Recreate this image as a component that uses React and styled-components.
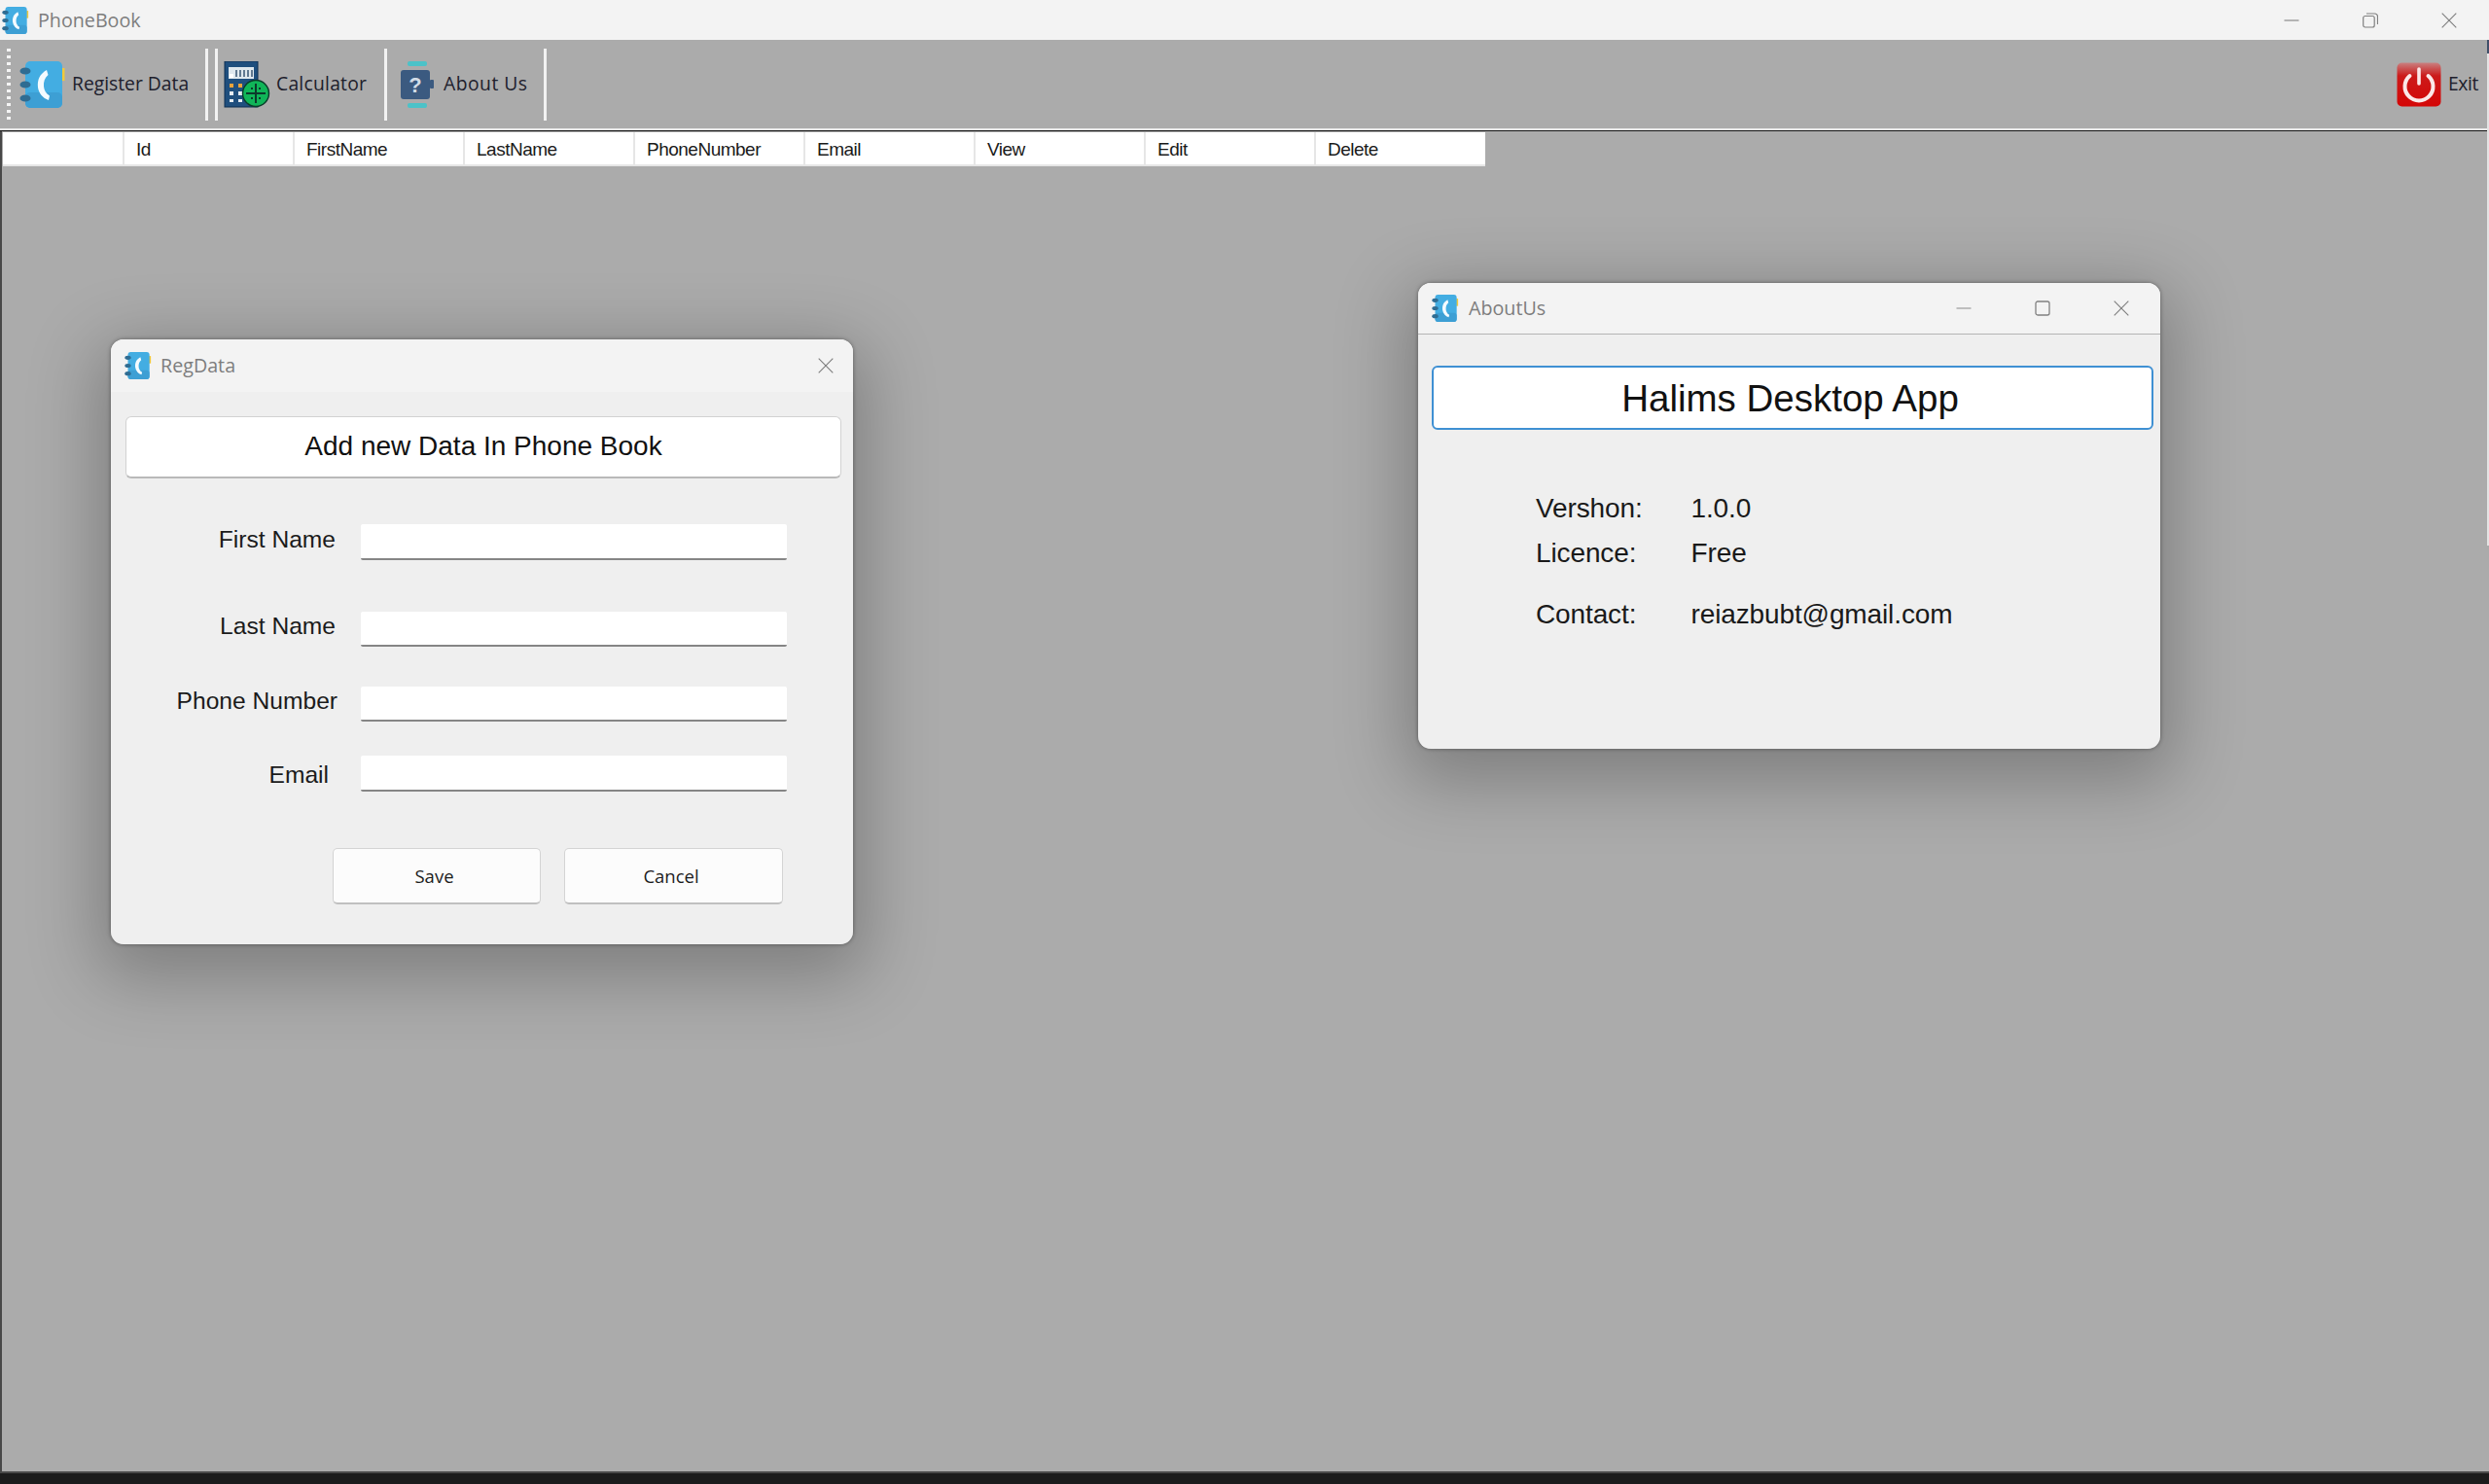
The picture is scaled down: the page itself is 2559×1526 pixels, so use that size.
import React from "react";
import styled, { createGlobalStyle } from "styled-components";

const Global = createGlobalStyle`
  html, body { margin: 0; padding: 0; width: 2559px; height: 1526px; overflow: hidden; background: #1c1c1c; }
  * { box-sizing: border-box; }
`;

const Screen = styled.div`
  width: 2559px; height: 1526px; display: flex; flex-direction: column;
  background: #ababab; font-family: "Liberation Sans", Arial, sans-serif; position: relative;
`;
const TitleBar = styled.div`
  height: 41px; flex: none; background: #f3f3f3; display: flex; align-items: center;
  padding-left: 2px;
`;
const TitleText = styled.span`
  margin-left: ${p => p.$gap || 9}px; color: #7d7d7d; font: 19.7px "Open Sans", sans-serif; line-height: 1;
`;
const Controls = styled.div`
  margin-left: auto; display: flex; align-items: center; gap: ${p => p.$gap}px; padding-right: ${p => p.$right}px;
`;
const Toolbar = styled.div`
  height: 91px; flex: none; background: #ababab; display: flex; align-items: center; position: relative;
  padding-left: 7px; border-top-left-radius: 6px;
`;
const Grip = styled.div`
  width: 5px; height: 74px; margin-right: 8px; flex: none;
  background-image: linear-gradient(#f4f4f4 50%, transparent 50%);
  background-size: 4px 7px;
  background-repeat: repeat-y;
`;
const ToolItem = styled.div`
  display: flex; align-items: center; flex: none; gap: ${p => p.$gap}px; width: ${p => p.$width}px;
  font: 19.3px "Open Sans", sans-serif; color: #20202c; white-space: nowrap; padding-left: ${p => p.$pad || 0}px;
`;
const ToolLabel = styled.span`
  margin-top: -3px; letter-spacing: ${p => p.$track || 0}px;
`;
const Sep = styled.div`
  width: 3px; height: 74px; background: #f2f2f2; flex: none; margin-right: ${p => p.$after || 0}px;
`;
const Spacer = styled.div` flex: 1; `;
const Rule = styled.div`
  height: 3px; flex: none; border-top: 2px solid #e8e8e8; border-bottom: 1px solid #151515;
`;
const Desktop = styled.div`
  flex: 1; position: relative; background: #ababab;
  border-left: 2px solid #484848;
  border-bottom: 2px solid #4a4a4a;
`;
const HeaderRow = styled.div`
  display: grid; grid-template-columns: 123px repeat(7, 175px) 176px; width: 1524px; height: 35px;
  margin: 1px 0 0 1px; background: #fff;
`;
const HeaderCell = styled.div`
  border-left: ${p => p.$first ? 0 : "2px solid #e6e6e6"}; border-bottom: 2px solid #e6e6e6;
  padding: 3px 0 0 12px; display: flex; align-items: center;
  font: 19px "Liberation Sans", Arial, sans-serif; color: #1a1a1a; letter-spacing: -0.5px;
`;
const Footer = styled.div` height: 11px; flex: none; background: #1c1c1c; `;
const EdgeMark = styled.div`
  position: absolute; right: 0; top: 41px; width: 2px; height: 520px; background: #e4e4e4;
`;
const EdgeTip = styled.div`
  position: absolute; right: 0; top: 41px; width: 2px; height: 14px; background: #40506a;
`;
const Window = styled.div`
  position: absolute; left: ${p => p.$x}px; top: ${p => p.$y}px; width: ${p => p.$w}px; height: ${p => p.$h}px;
  background: #efefef; border-radius: 13px; display: flex; flex-direction: column; overflow: hidden;
`;
const Shadow = styled.div`
  position: absolute; left: ${p => p.$x}px; top: ${p => p.$y}px; width: ${p => p.$w}px; height: ${p => p.$h}px;
  border-radius: 13px; box-shadow: 0 0 4px rgba(0,0,0,.4), 0 20px 70px 14px rgba(0,0,0,.26);
`;
const WinTitle = styled.div`
  height: ${p => p.$h}px; flex: none; background: #f3f3f3; display: flex; align-items: center; padding-left: 14px;
  border-bottom: ${p => p.$line ? "1px solid #b4b4b4" : "0"};
`;
const HeadingBox = styled.div`
  margin: ${p => p.$top}px ${p => p.$side}px 0 ${p => p.$left}px; height: ${p => p.$h}px; flex: none;
  display: flex; align-items: center; justify-content: center; background: #fff; border-radius: 6px;
  border: ${p => p.$focus ? "2px solid #3f90d3" : "1px solid #d2d2d2"};
  ${p => p.$focus ? "" : "border-bottom: 2px solid #b9b9b9;"}
  font-size: ${p => p.$size}px; color: #111; padding-right: ${p => p.$shift || 0}px;
  padding-top: ${p => p.$focus ? 1 : 0}px;
  padding-bottom: ${p => p.$focus ? 0 : 2}px;
`;
const FormRow = styled.div`
  display: flex; align-items: center; flex: none; justify-content: flex-end; height: ${p => p.$h}px; margin-top: ${p => p.$top}px;
  padding-right: 68px;
`;
const Label = styled.label`
  font-size: 24.6px; color: #1b1b1b; margin-right: ${p => p.$gap}px; margin-top: ${p => p.$dy || 0}px; white-space: nowrap;
`;
const Field = styled.div`
  width: 438px; height: 100%; background: #fff; border-bottom: 2px solid #858585; border-radius: 2px;
`;
const Buttons = styled.div`
  display: flex; gap: 24px; margin: 58px 0 0 228px;
`;
const Btn = styled.button`
  width: ${p => p.$w}px; height: 58px; background: #fcfcfc; border: 1.5px solid #d4d4d4; border-bottom: 2px solid #c0c0c0;
  border-radius: 5px; font: 18.5px "Open Sans", sans-serif; color: #1c1c1c; padding: 0 5px 0 0;
`;
const Info = styled.div`
  display: flex; flex-direction: column; padding: 0 0 0 121px;
`;
const InfoRow = styled.div`
  display: flex; align-items: center; height: 34px; margin-top: ${p => p.$top}px;
  font-size: 28px; color: #1a1a1a; white-space: nowrap; letter-spacing: -0.12px;
`;
const InfoKey = styled.span` width: 159.5px; flex: none; `;

const BookIcon = ({ size }) => (
  <svg width={size} height={size} viewBox="0 0 48 48">
    <rect x="43" y="7" width="3.5" height="13" fill="#f0c93c" />
    <rect x="6" y="0" width="38" height="48" rx="5" fill="#43ade2" />
    <rect x="6" y="32" width="38" height="16" rx="5" fill="#3d9fd4" />
    <ellipse cx="6" cy="10" rx="5.5" ry="3.6" fill="#2f6c92" />
    <ellipse cx="6" cy="24" rx="5.5" ry="3.6" fill="#2f6c92" />
    <ellipse cx="6" cy="38" rx="5.5" ry="3.6" fill="#2f6c92" />
    <path d="M28 9 C21 13 18 19 19 27 C20 33 24 38 30 40 L31 35.5 C27 33 25.5 30 25 26 C24.6 21 26 17 29.5 14 Z" fill="#f4fbff" />
  </svg>
);

const CalcIcon = () => (
  <svg width="48" height="48" viewBox="0 0 48 48">
    <rect x="1" y="0" width="34" height="47" fill="#1f4f7e" stroke="#0f2f50" strokeWidth="1" />
    <rect x="5" y="6" width="26" height="12" fill="#dfe8ee" />
    <rect x="6" y="13" width="4" height="4" fill="#fff" />
    <path d="M13 9v7M17 9v7M21 9v7M25 9v7M29 9v7" stroke="#1f3f60" strokeWidth="1.3" />
    <g fill="#e9a33c">
      <rect x="6" y="23" width="4" height="4" /><rect x="15" y="23" width="4" height="4" /><rect x="24" y="23" width="4" height="4" />
    </g>
    <g fill="#e6edf2">
      <rect x="6" y="31" width="4" height="4" /><rect x="15" y="31" width="4" height="4" />
      <rect x="6" y="39" width="4" height="3" /><rect x="15" y="39" width="4" height="3" />
    </g>
    <circle cx="33" cy="33" r="13.5" fill="#10b558" stroke="#0a3b2a" strokeWidth="1.4" />
    <path d="M33 23v20M23 33h20" stroke="#0c3a2b" strokeWidth="2" />
    <path d="M28 28h2M36 28h2M28 38h2M36 38h2" stroke="#0c3a2b" strokeWidth="2" />
  </svg>
);

const AboutIcon = () => (
  <svg width="35" height="48" viewBox="0 0 35 48">
    <rect x="7" y="0" width="20" height="5" rx="2" fill="#4cc2c8" />
    <rect x="7" y="43" width="20" height="5" rx="2" fill="#4cc2c8" />
    <rect x="0" y="9" width="30" height="30" rx="3" fill="#3b5a80" />
    <rect x="30" y="19" width="4" height="9" rx="1" fill="#3b5a80" />
    <text x="15" y="32" textAnchor="middle" fontFamily="Liberation Sans, sans-serif" fontWeight="700" fontSize="22" fill="#d3dce6">?</text>
  </svg>
);

const ExitIcon = () => (
  <svg width="46" height="46" viewBox="0 0 46 46">
    <defs>
      <linearGradient id="exitRed" x1="0" y1="0" x2="0" y2="1">
        <stop offset="0" stopColor="#c98080" />
        <stop offset="0.3" stopColor="#cc1a1a" />
        <stop offset="1" stopColor="#d40606" />
      </linearGradient>
    </defs>
    <rect x="0.5" y="0.5" width="45" height="45" rx="5" fill="url(#exitRed)" />
    <path d="M13.5 14 A14.5 14.5 0 1 0 32.5 14" fill="none" stroke="#fbe9e9" strokeWidth="4" strokeLinecap="round" />
    <path d="M23 7v15" stroke="#fbe9e9" strokeWidth="3.6" strokeLinecap="round" />
  </svg>
);

const Minimize = () => (
  <svg width="16" height="16" viewBox="0 0 16 16"><path d="M0.5 8h15" stroke="#8a8a8a" strokeWidth="1.2" fill="none" /></svg>
);
const Maximize = () => (
  <svg width="16" height="16" viewBox="0 0 16 16"><rect x="1" y="1" width="14" height="14" rx="2" stroke="#808080" strokeWidth="1.3" fill="none" /></svg>
);
const Restore = () => (
  <svg width="16" height="16" viewBox="0 0 16 16"><rect x="0.7" y="3.5" width="11.5" height="11.5" rx="2" stroke="#808080" strokeWidth="1.2" fill="none" /><path d="M4 1h8.5a3 3 0 0 1 3 3v8" stroke="#808080" strokeWidth="1.2" fill="none" /></svg>
);
const Close = () => (
  <svg width="16" height="16" viewBox="0 0 16 16"><path d="M0.7 0.7l14.6 14.6M15.3 0.7L0.7 15.3" stroke="#7c7c7c" strokeWidth="1.1" fill="none" /></svg>
);

const columns = ["Id", "FirstName", "LastName", "PhoneNumber", "Email", "View", "Edit", "Delete"];

export default function App() {
  return (
    <Screen>
      <Global />
      <TitleBar>
        <BookIcon size={28} />
        <TitleText $gap={9}>PhoneBook</TitleText>
        <Controls $gap={65} $right={33}>
          <Minimize /><Restore /><Close />
        </Controls>
      </TitleBar>
      <Toolbar>
        <Grip />
        <ToolItem $gap={6} $width={191}><BookIcon size={48} /><ToolLabel>Register Data</ToolLabel></ToolItem>
        <Sep $after={7} />
        <Sep $after={6} />
        <ToolItem $gap={6} $width={165}><CalcIcon /><ToolLabel $track={0.25}>Calculator</ToolLabel></ToolItem>
        <Sep />
        <ToolItem $gap={9} $width={161} $pad={14}><AboutIcon /><ToolLabel $track={0.5}>About Us</ToolLabel></ToolItem>
        <Sep />
        <Spacer />
        <ToolItem $gap={7} $width={95}><ExitIcon /><ToolLabel $track={-0.4}>Exit</ToolLabel></ToolItem>
      </Toolbar>
      <Rule />
      <Desktop>
        <HeaderRow>
          <HeaderCell $first />
          {columns.map(c => <HeaderCell key={c}>{c}</HeaderCell>)}
        </HeaderRow>
        <Shadow $x={112} $y={214} $w={763} $h={622} />
        <Window $x={112} $y={214} $w={763} $h={622}>
          <WinTitle $h={54}>
            <BookIcon size={28} />
            <TitleText $gap={9}>RegData</TitleText>
            <Controls $gap={0} $right={20}><Close /></Controls>
          </WinTitle>
          <HeadingBox $top={25} $left={15} $side={12} $h={64} $size={28}>Add new Data In Phone Book</HeadingBox>
          <FormRow $h={37} $top={47}><Label $gap={26} $dy={-6}>First Name</Label><Field /></FormRow>
          <FormRow $h={36} $top={53}><Label $gap={26} $dy={-6}>Last Name</Label><Field /></FormRow>
          <FormRow $h={36} $top={41}><Label $gap={24} $dy={-6}>Phone Number</Label><Field /></FormRow>
          <FormRow $h={37} $top={35}><Label $gap={33} $dy={3}>Email</Label><Field /></FormRow>
          <Buttons>
            <Btn $w={214}>Save</Btn>
            <Btn $w={225}>Cancel</Btn>
          </Buttons>
        </Window>
        <Shadow $x={1456} $y={156} $w={763} $h={479} />
        <Window $x={1456} $y={156} $w={763} $h={479}>
          <WinTitle $h={53} $line>
            <BookIcon size={28} />
            <TitleText $gap={10}>AboutUs</TitleText>
            <Controls $gap={65} $right={32}><Minimize /><Maximize /><Close /></Controls>
          </WinTitle>
          <HeadingBox $focus $top={32} $left={14} $side={7} $h={66} $size={38.5} $shift={5}>Halims Desktop App</HeadingBox>
          <Info>
            <InfoRow $top={64}><InfoKey>Vershon:</InfoKey>1.0.0</InfoRow>
            <InfoRow $top={12}><InfoKey>Licence:</InfoKey>Free</InfoRow>
            <InfoRow $top={29}><InfoKey>Contact:</InfoKey>reiazbubt@gmail.com</InfoRow>
          </Info>
        </Window>
      </Desktop>
      <Footer />
      <EdgeMark />
      <EdgeTip />
    </Screen>
  );
}
